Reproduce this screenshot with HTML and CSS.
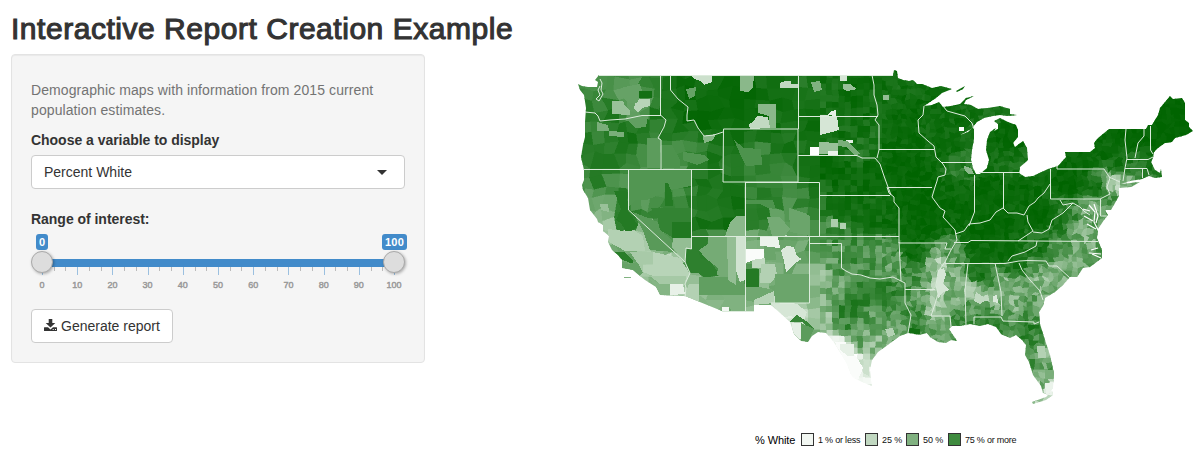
FILE: index.html
```html
<!DOCTYPE html>
<html lang="en">
<head>
<meta charset="utf-8">
<title>Interactive Report Creation Example</title>
<link rel="stylesheet" href="styles.css">
</head>
<body>
<h1 class="title">Interactive Report Creation Example</h1>
<main class="layout">
  <form class="well">
    <p class="help">Demographic maps with information from 2015 current<br>population estimates.</p>
    <label class="label label-select">Choose a variable to display</label>
    <div class="select"><span>Percent White</span><i class="caret"></i></div>
    <label class="label label-range">Range of interest:</label>
    <div class="slider">
      <div class="values"><span class="badge">0</span><span class="badge">100</span></div>
      <div class="rail"><i class="handle"></i><i class="handle"></i></div>
      <svg class="ticks" width="374" height="8" shape-rendering="crispEdges"></svg>
      <div class="scale"><span>0</span><span>10</span><span>20</span><span>30</span><span>40</span><span>50</span><span>60</span><span>70</span><span>80</span><span>90</span><span>100</span></div>
    </div>
    <button type="button" class="button">
      <svg width="13" height="12" viewBox="0 0 13 12"><path fill="#333" d="M4.700 0h3.600v4h3L6.500 8.600 1.700 4h3z"/><path fill="#333" fill-rule="evenodd" d="M.5 8.200H4L6.500 10.400 9 8.200H12.500Q13 8.200 13 8.700V11.500Q13 12 12.500 12H.5Q0 12 0 11.500V8.700Q0 8.200.5 8.200zM8.700 10v1h1v-1zM11 10v1h1v-1z"/></svg>
      <span>Generate report</span>
    </button>
  </form>
  <section class="plot">
    <svg class="map" width="641" height="370" viewBox="560 60 641 370">
      <defs><clipPath id="land"><path d="M578 84L582 86 588 87 597 87 598 82 595 80 599 75H893L894 70 897 71 898 78 903 80 909 81 913 80 917 84 922 84 932 88 941 86 952 89 942 93 936 98 924 106 932 105 939 102 943 107 951 106 960 104 966 98 974 96 966 100 964 104 971 105 978 109 988 108 1000 106 1010 109 1010 114 1017 115 1007 116 1000 115 993 116 984 118 977 122 971 129 960 135 968 132 974 126 974 139 972 150 971 160 973 168 976 174 980 174 987 168 989 160 986 150 987 140 990 132 996 128 994 131 998 129 998 124 994 121 1000 118 1008 122 1016 125 1018 130 1018 137 1013 143 1015 147 1023 141 1027 148 1028 160 1020 167 1019 173 1025 177 1033 176 1048 169 1058 166 1066 157 1065 152 1078 152 1090 152 1095 148 1094 143 1098 138 1109 129H1146L1148 125 1152 125 1158 115 1160 108 1170 96 1173 99 1182 98 1185 103V120L1189 123 1189 127 1193 131 1186 135 1175 138 1172 142 1165 143 1158 148 1154 152 1153 158 1151 162 1155 170 1160 173 1161 169 1162 177 1155 178 1149 176 1142 179 1130 181 1121 184 1140 182 1131 187 1119 188 1119 196 1111 210 1105 210 1108 215 1104 220 1098 229 1097 238 1102 250 1102 258 1094 264 1090 267 1083 268 1077 277 1070 277 1063 285 1055 292 1045 298 1043 306 1039 312 1040 324 1045 340 1050 355 1054 373 1053 388 1048 395 1043 393 1041 386 1033 375 1029 362 1025 355 1026 345 1022 340 1016 335 1010 338 1001 334 996 327 988 324 980 326 970 324 960 326 952 326 949 329 957 341 951 340 946 343 938 342 930 337 927 333 919 335 908 333 900 336 893 341 885 347 878 352 872 360 870 370 871 380 872 386 862 382 852 377 847 364 840 352 833 341 826 333 818 332 812 336 808 342 801 341 794 334 790 322 780 313 771 305 754 305V311H722L685 296 660 295 656 287 645 280 640 276 633 270 622 268 622 260 618 255 612 250 608 242 609 236 603 231 603 225 598 222 597 219 590 210 588 198 583 190 582 185 584 180 584 170 581 157 583 145 585 137 585 122 586 108 584 95 580 90ZM956 91L965 86 963 89 957 92ZM624 277H631V278H624ZM1032 402L1046 397 1052 391 1053 395 1046 400 1033 404Z"/></clipPath></defs>
      <g clip-path="url(#land)" shape-rendering="crispEdges"><g id="counties"></g><g id="patches"></g></g>
      <g class="lakes"><path d="M1089 205L1095 212 1094 222 1099 232M1094 204L1098 216 1096 223M1090 211l-7-2M1093 221l-9-5M1096 229l-9-5M1101 254l-12-1M1101 258l-9-4M1098 248l-7 2"/></g>
      <g class="states" fill="none">
        <path d="M600 79L602 83 601 90 603 94 599 101 596 99 600 95 598 90 600 86M599 75.500H893M585 112L595 113 598 116 600 121 610 120 625 119 642 115.500H661M660.500 75V115L666 120 664 127 658 138 661 140V169M583 169.500H723M628.500 169V210L685 262M691.500 169V249L686 248 685 262 690 273 685 284 686 288 685 297M670.500 75V90L678 99 688 107 687 115 687 121 694 120 698 128 704 136 714 135 723 132M723.500 129H798V182H723ZM745.500 182V311M691 236.500H899M722 311.500H754M798.500 75V129M745 182.500H819.500V236M819 195.500H890M809.500 236V303H771M809 243.500H841.500V268L846 271 852 274 861 275 870 278 880 279 893 277 901 281M798 155.500H857L862 158 875 158 880 164 884 176 888 187 891 195M798 116.500H878M872 75L874 85 874 95 877 105 878 115 875 120 879 125V150L877 158M879 149.500H934M924 106L923 115 918 120 919 133 928 141 934 146 936 157 943 164 946 169 945 175 938 177 937 181 935 187 932 197 940 208 945 211 943 217 955 230 957 240 951 250 945 262 938 272 936 285 938 294 935 304 931 316H950L951 327M941 162.500H972M888 187.500H932M887 187L889 193 894 197 894 202 899 208V243H947L945 249H951M943 106L947 111 965 116 972 123 974 129M899 242L901 281 905 283V303L911 315 908 333M905 289.500H935M974.500 175V212L969 226M1003.500 173V208M979 172.500H1020M955 234L964 231 969 224 980 223 990 220 996 212 1003 208 1008 213 1017 213 1024 215 1029 206 1035 202 1038 198 1044 193 1050 184M1050.500 169V199H1100M1057 165V169H1104L1110 178 1107 187 1110 194 1100 199M954 242.500H968L971 240.500 1098 241.500M945 263.500H1005L1019 261 1028 260.500 1046 261 1049 266H1057L1070 278M1008 261L1012 256 1025 252 1036 246 1037 241M1019 263L1022 270 1030 280 1040 291 1043 300M968 263L965 290 966 326M995 263L1001 292 1002 316M974 324L974 317H1001L1003 321 1034 322 1034 324 1039 322M1027 215L1028 222 1033 231 1018 241M1033 232L1042 233 1049 229 1052 220 1063 213 1073 203 1063 205 1060 200M1073 203L1080 207 1085 212 1090 215M1100.500 199V216H1107M1126 129L1125 140 1127 158 1125 168 1123 181M1144 129L1144 136 1138 143 1135 158M1150.500 126V150L1153 154M1127 159.500H1148L1153 157M1125 168.500H1147L1149 175M1142.500 169V178M1109 177L1120 182"/>
      </g>
    </svg>
    <div class="legend"><span class="legend-title">% White</span><i class="swatch s1"></i><span class="t1">1 % or less</span><i class="swatch s25"></i><span class="t25">25 %</span><i class="swatch s50"></i><span class="t50">50 %</span><i class="swatch s75"></i><span class="t75">75 % or more</span></div>
  </section>
</main>
<script src="map.js"></script>
</body>
</html>
```
FILE: styles.css
```css
* { box-sizing: border-box; }
body { margin: 0; height: 467px; overflow: hidden; background: #fff; color: #333; font: 14px/20px "Liberation Sans", Arial, sans-serif; }
.title { margin: 0; padding: 12px 0 0 11px; height: 54px; font-size: 30px; line-height: 33px; font-weight: 400; letter-spacing: .53px; -webkit-text-stroke: 1.1px #333; white-space: nowrap; }
.layout { display: flex; align-items: flex-start; }
.well { width: 414px; height: 309px; margin-left: 11px; padding: 25px 19px 19px; border: 1px solid #e3e3e3; border-radius: 4px; background: #f5f5f5; box-shadow: inset 0 1px 1px rgba(0,0,0,.05); }
.help { margin: 0 0 10px; color: #737373; letter-spacing: .09px; white-space: nowrap; }
.label { display: block; font-weight: 700; letter-spacing: -.03px; }
.label-select { margin-bottom: 5px; }
.select { width: 374px; height: 34px; padding: 0 17px 0 12px; display: flex; align-items: center; justify-content: space-between; background: #fff; border: 1px solid #ccc; border-radius: 4px; }
.caret { border: 5px solid transparent; border-top-color: #333; border-bottom: 0; }
.label-range { margin-top: 20px; }
.slider { width: 374px; margin-top: 5px; }
.values { display: flex; justify-content: space-between; height: 25px; padding-left: 5px; margin-right: -2px; }
.badge { height: 16px; padding: 0 3px; border-radius: 3px; background: #428bca; color: #fff; font-size: 11px; line-height: 16px; font-weight: 700; }
.badge:last-child { letter-spacing: .2px; }
.rail { height: 8px; margin: 0 11px; background: #428bca; display: flex; align-items: center; justify-content: space-between; }
.handle { width: 22px; height: 22px; margin: -8px -11px -6px; border: 1px solid #aaa; border-radius: 50%; background: #ddd; box-shadow: 1px 1px 3px rgba(0,0,0,.3); z-index: 1; }
.ticks { display: block; }
.scale { display: flex; margin: 4px -6.6px 0; height: 12px; width: 387.2px; color: #999; font-size: 9px; line-height: 12px; -webkit-text-stroke: .45px #999; }
.scale span { flex: 1; text-align: center; }
.button { display: flex; align-items: center; width: 142px; height: 34px; margin-top: 18px; padding: 0 12px; gap: 4px; border: 1px solid #ccc; border-radius: 4px; background: #fff; color: #333; font: inherit; white-space: nowrap; }
.button svg { flex: none; margin-top: -2px; }
.plot { margin-left: 135px; width: 641px; padding-top: 6px; }
.map { display: block; }
.states { stroke: #dcebdc; stroke-width: 1; }
.lakes { fill: none; stroke: #fff; stroke-width: 1.2; }
.legend { display: flex; align-items: center; height: 19px; padding-left: 195px; color: #111; font-size: 9px; white-space: nowrap; }
.legend-title { width: 46px; font-size: 11px; letter-spacing: -.1px; color: #000; }
.swatch { width: 13px; height: 13px; border: 1px solid #333; flex: none; margin-right: 4px; }
.s1 { background: #f2f7f2; }
.s25 { background: #c1d8c1; }
.s50 { background: #80b180; }
.s75 { background: #3f8b3f; }
.t1 { width: 47px; letter-spacing: -.2px; }
.t25 { width: 24px; letter-spacing: -.1px; }
.t50 { width: 25px; letter-spacing: -.1px; }
.t75 { letter-spacing: -.22px; }
```
FILE: map.js
```javascript
const NS = 'http://www.w3.org/2000/svg';
function el(parent, name, attrs) {
  const node = document.createElementNS(NS, name);
  for (const key in attrs) node.setAttribute(key, attrs[key]);
  parent.appendChild(node);
}
// Share 0..1 mapped to a white-to-dark-green ramp.
function shade(v) {
  const c = Math.max(0, Math.min(1, v));
  const rb = Math.round(255 - 255 * c);
  return `rgb(${rb},${Math.round(255 - 155 * c)},${rb})`;
}
let seed = 41;
function random() {
  seed = (seed * 1664525 + 1013904223) % 4294967296;
  return seed / 4294967296;
}
// Local shares, in hundredths: x y share.
const samples = `590 95 75 585 105 85 610 85 75 625 90 66 650 85 74 640 105 62 600 105 78 610 115 85
600 130 78 615 145 85 590 150 85 640 135 90 625 160 85 652 150 65
668 110 92 670 140 90 670 160 68 685 145 75 700 160 78 665 85 92
690 90 95 740 100 98 700 120 96 780 80 90 780 120 93 760 110 95 720 115 96 715 155 88
735 140 92 755 155 77 750 175 81 785 145 90 785 170 82
640 180 68 670 180 68 670 200 73 640 205 68 655 215 78 680 228 85 665 240 65 680 245 45
600 180 82 620 185 72 590 185 70 595 200 60 605 210 45 620 200 85 628 220 85 600 225 50 610 235 35 625 240 32 640 235 40 620 255 60 635 260 55 650 255 35 670 265 30 650 270 35 662 285 50 680 275 33
705 180 90 730 200 93 710 210 88 730 225 92 705 225 90 740 190 88
695 245 80 705 265 80 725 245 55 720 280 57 695 290 35 735 260 50 735 300 50 715 300 50
755 195 80 770 190 85 795 195 72 810 200 85 760 220 85 780 225 60 800 228 60 815 190 90
752 245 45 770 260 50 752 275 75 765 275 40 800 265 55 800 290 55 760 295 48 775 280 58
830 85 92 810 95 87 850 100 95 810 130 94 850 130 92 860 150 87 830 170 98 870 175 96 810 175 92
840 210 96 870 220 93 830 225 76 890 220 95 855 255 74 880 250 67 890 265 62 830 240 74 870 270 70
825 255 60 815 280 45 835 290 60 860 290 80 880 290 82 850 310 82 895 300 77 825 310 47 850 325 75 870 320 65 890 325 60 895 335 60 860 340 60 870 345 45 840 345 8 850 360 2 865 365 18 860 380 5 810 315 40 795 318 15 805 335 50 785 310 15
890 90 92 910 110 96 900 140 96 915 90 93 900 165 98 925 180 98 940 120 94 950 145 95 960 160 86 960 170 82 955 190 96 960 215 96 910 200 98 925 225 98 915 238 97
988 190 98 1020 190 97 1010 140 98 1005 160 92 1020 165 88 990 112 90 1000 225 98 980 235 98 1040 215 99 1070 185 99 1095 190 90 940 215 98
1080 160 97 1110 150 96 1118 165 91 1130 185 55 1116 183 30 1135 140 99 1160 140 99 1175 115 99 1150 165 90 1135 172 78 1113 200 68
1090 208 56 1100 225 62 1060 225 87 1080 230 55 1070 220 77 1090 240 50 1040 250 89 1060 250 68 1080 255 56 1098 255 68 1020 262 93
980 252 95 1005 252 97 950 258 64 915 255 95 910 275 74 930 275 58 938 265 34 940 285 20 952 280 54 955 300 54 940 305 38 955 320 76 937 315 34
920 300 64 915 320 75 935 325 69 945 335 64 980 275 90 975 292 38 990 298 34 985 310 68 970 310 67 995 285 68
1010 270 86 1008 282 46 1000 295 46 1020 290 52 1030 300 60 1015 305 50 1030 315 70 1010 318 67 1035 268 65 1045 280 46 1060 275 54 1065 283 54 1050 292 54
1000 328 76 980 322 82 1030 330 82 1035 345 76 1042 350 45 1035 365 74 1048 370 62 1050 388 15 1045 385 50 1040 375 40`.split(/\s+/).map(Number);
function share(x, y) {
  let total = 0, weight = 0;
  for (let i = 0; i < samples.length; i += 3) {
    const dx = x - samples[i], dy = y - samples[i + 1];
    const w = 1 / Math.pow(dx * dx + dy * dy + 12, 2.200);
    total += w * samples[i + 2];
    weight += w;
  }
  return total / weight / 100;
}
// Irregular meshes, finer toward the east: [left, right, cell width, cell height, jitter].
const bands = [[570, 744, 12, 11, .650], [744, 820, 12.660, 11, .480], [820, 882, 6.200, 6, .220], [882, 1200, 4.900, 4.800, .800]];
const counties = document.getElementById('counties');
for (const [left, right, w, h, jitter] of bands) {
  const cols = Math.round((right - left) / w), rows = Math.ceil(350 / h), points = [];
  for (let r = 0; r <= rows; r++) {
    points[r] = [];
    for (let c = 0; c <= cols; c++) {
      const edge = c === 0 || c === cols;
      points[r][c] = [left + c * (right - left) / cols + (edge ? 0 : (random() - .5) * w * jitter), 66 + r * h + (edge ? 0 : (random() - .5) * h * jitter)];
    }
  }
  for (let r = 0; r < rows; r++) for (let c = 0; c < cols; c++) {
    const quad = [points[r][c], points[r][c + 1], points[r + 1][c + 1], points[r + 1][c]];
    const base = share((quad[0][0] + quad[2][0]) / 2, (quad[0][1] + quad[2][1]) / 2);
    const spread = .035 + base * (1 - base) * (left > 800 ? 1.200 : .550);
    const color = shade(base + (random() - .5) * spread);
    el(counties, 'polygon', { points: quad.join(' '), fill: color, stroke: color, 'stroke-width': .4 });
  }
}
// Larger individual counties.
const patches = [
  [40, '612 101 623 101 625 106 630 110 630 115 612 114'], [28, '635 103 640 99 650 99 650 106 642 108 638 112 634 109'],
  [60, '624 87 640 84 643 93 637 103 628 103 618 92'], [92, '639 91 652 91 652 98 639 98'],
  [52, '609 131 624 132 624 137 609 136'], [52, '597 122 608 125 609 131 597 131'], [62, '630 117 648 116 646 127 636 128 629 122'],
  [64, '647 138 660 138 660 168 647 168'], [20, '692 75 712 75 712 82 704 85 700 81 693 78'], [60, '686 89 696 87 695 96 689 99'],
  [48, '703 136 716 134 713 140 704 143'], [70, '661 145 672 145 680 160 680 168 661 168'], [68, '683 152 705 155 709 160 697 165 683 160'],
  [46, '740 75 754 75 753 87 748 92 740 91'], [24, '780 83 785 81 791 81 791 84 798 84 798 88 780 88'],
  [46, '758 104 776 104 776 128 769 128 769 116 758 113'], [24, '749 124 753 122 757 116 768 117 770 128 750 129'],
  [70, '734 140 744 148 761 149 762 165 746 166 741 156'], [16, '840 75 847 75 847 81 840 81'], [50, '811 82 820 81 822 90 814 92'],
  [40, '843 84 850 84 857 89 847 91 843 89'], [42, '883 95 889 95 889 100 883 100'], [10, '827 115 832 111 836 110 836 116'],
  [16, '820 115 837 116 839 130 832 132 820 135'], [0, '810 147 819 147 819 155 810 155'], [40, '819 142 838 143 838 154 819 154'],
  [8, '828 151 838 151 838 155 828 155'], [10, '846 140 853 140 853 143 846 143'], [52, '838 140 847 141 853 147 861 154 855 155 846 147 838 146'],
  [2, '959 127 964 127 964 131 959 131'], [68, '628 169 691 169 691 186 670 190 647 200 635 200 628 207'],
  [86, '665 183 668 183 672 193 673 206 665 206'], [80, '650 208 691 208 691 222 672 222 672 237 658 229 658 215'],
  [87, '672 222 691 222 691 238 672 238'], [65, '633 212 658 222 660 230 672 240 674 252 650 250 643 231'], [42, '673 238 691 238 691 249 685 249 685 260 672 248'],
  [86, '614 191 627 191 628 211 638 225 633 230 627 233 621 223 616 220 621 209'], [40, '600 204 608 204 609 212 601 210'],
  [30, '608 229 624 231 635 231 643 236 645 251 625 251 609 242'], [28, '653 252 680 258 690 274 686 282 653 276 643 272 643 265 653 265'],
  [34, '630 252 653 252 653 264 638 264'], [84, '613 252 625 252 633 261 633 264 618 258'], [60, '621 264 638 263 643 273 639 276 632 270 622 268'],
  [48, '649 278 660 284 670 284 670 295 660 295 656 287'], [9, '670 284 683 284 685 294 670 295'], [35, '650 276 686 276 685 284 660 284'],
  [82, '691 237 707 237 707 246 699 252 700 258 711 262 717 271 718 276 704 277 698 273 690 273 686 265 686 249 691 249'],
  [54, '699 250 708 244 708 237 727 237 727 277 717 275 718 268 705 258'], [62, '699 277 729 277 745 284 745 295 699 295'],
  [30, '689 284 699 284 699 302 685 296'], [42, '727 236 736 236 736 285 728 280'], [18, '736 236 745 236 745 280 740 282 736 270'],
  [50, '722 295 745 295 745 311 732 311'], [5, '722 307 729 307 729 311 722 311'], [46, '725 236 730 223 736 216 745 216 745 236'],
  [8, '760 237 778 237 780 248 760 246'], [2, '745 249 764 249 764 259 754 260 745 263'], [24, '752 260 765 258 765 268 752 268'],
  [14, '781 250 787 246 794 247 797 256 802 259 797 262 786 272 784 261'], [58, '764 246 775 248 776 260 765 260'],
  [30, '761 264 775 264 777 275 771 283 760 283'], [86, '746 269 759 269 759 287 746 287'], [56, '745 287 760 287 774 290 774 295 754 302 745 300'],
  [28, '754 300 774 291 774 303 754 305'], [58, '775 274 809 274 809 303 775 303'], [24, '781 236 783 228 787 236'],
  [54, '767 217 780 217 790 229 785 236 772 236'], [58, '789 208 805 213 810 216 810 236 790 232'], [70, '745 200 773 200 776 209 768 208 760 204 745 204'],
  [32, '831 219 838 219 838 227 831 227'], [30, '840 223 846 223 846 229 840 229'],
  [16, '771 304 797 304 807 312 803 324 791 316 784 317 778 310'], [78, '789 322 797 315 806 321 814 329 808 329 803 322'],
  [10, '792 323 802 323 802 340 798 338 793 332'], [64, '801 323 814 329 808 342 801 341'],
  [2, '835 342 846 342 846 352 856 356 863 368 858 380 850 374 840 354'], [10, '840 344 854 344 854 356 848 356 840 350'],
  [20, '863 365 869 365 869 376 863 373'], [30, '885 329 893 328 895 335 888 337'], [93, '908 328 920 329 920 334 908 333'],
  [30, '1037 346 1045 346 1046 358 1038 358'], [8, '1045 383 1053 383 1053 395 1046 395'], [52, '1045 370 1054 370 1054 379 1045 379'],
  [16, '938 270 944 268 946 274 943 284 947 287 949 290 942 293 938 299 937 285'], [24, '976 292 982 296 988 299 980 304 974 301'], [14, '993 296 997 295 998 303 993 302'],
  [45, '964 166 971 168 974 174 969 174 965 171']
];
const layer = document.getElementById('patches');
for (const [v, points] of patches) el(layer, 'polygon', { points, fill: shade(v / 100) });

// Slider grid: every third tick is a labelled one.
const ticks = document.querySelector('.ticks');
for (let i = 0; i <= 30; i++) {
  const major = i % 3 === 0;
  el(ticks, 'rect', { x: Math.round(11 + i * 352 / 30), y: 0, width: 1, height: major ? 8 : 4, fill: major ? '#9bc0e0' : '#bbb' });
}
```
